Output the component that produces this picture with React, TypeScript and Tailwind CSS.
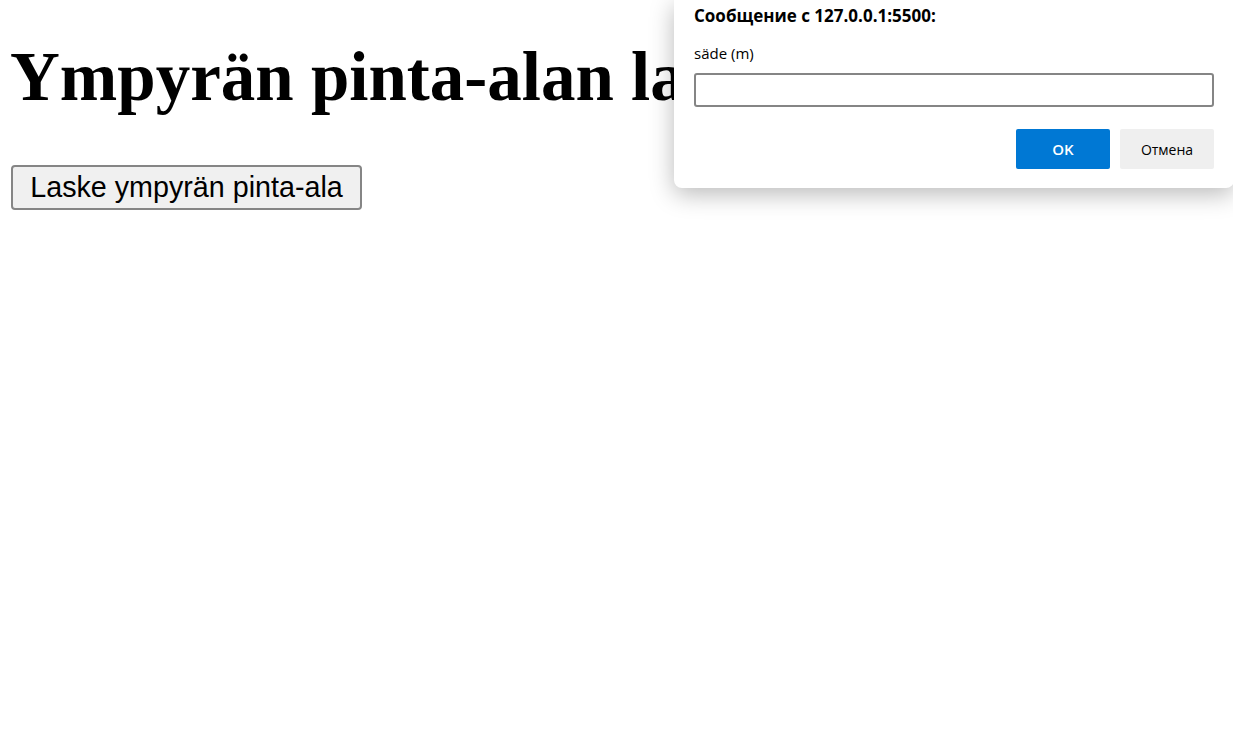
import React from 'react';

const App: React.FC = () => {
  return (
    <div className="relative min-h-[729px] w-full overflow-hidden bg-white">
      {/* sivu */}
      <div className="px-[10px]">
        <h1 className="mt-[43px] whitespace-nowrap font-['Liberation_Serif',serif] text-[69px] font-bold leading-[69px] text-black">
          Ympyrän pinta-alan laskeminen
        </h1>
        <button className="mt-[53px] ml-px h-[45px] w-[351px] rounded-[4px] border-2 border-[#858585] bg-[#f0f0f0] font-['Liberation_Sans',sans-serif] text-[28.7px] leading-none text-black">
          Laske ympyrän pinta-ala
        </button>
      </div>

      {/* prompt-dialogi */}
      <div className="absolute top-0 left-[674px] w-[560px] rounded-b-lg bg-white px-5 pt-[6px] pb-[19px] font-['Open_Sans','Noto_Sans',sans-serif] shadow-[0_6px_24px_rgba(0,0,0,0.28)]">
        <div className="text-[17px] font-bold leading-[20px] text-black">Сообщение с 127.0.0.1:5500:</div>
        <div className="mt-[17px] text-[15px] leading-[20px] text-black">säde (m)</div>
        <div className="mt-[10px] h-[34px] w-full rounded-[3px] border-2 border-[#858585] bg-white" />
        <div className="mt-[22px] flex justify-end gap-[10px]">
          <button className="h-[40px] w-[94px] rounded-[2px] bg-[#0078d4] text-[15px] font-semibold text-white">OK</button>
          <button className="h-[40px] w-[94px] rounded-[2px] bg-[#efefef] text-[14px] text-black">Отмена</button>
        </div>
      </div>
    </div>
  );
};

export default App;
